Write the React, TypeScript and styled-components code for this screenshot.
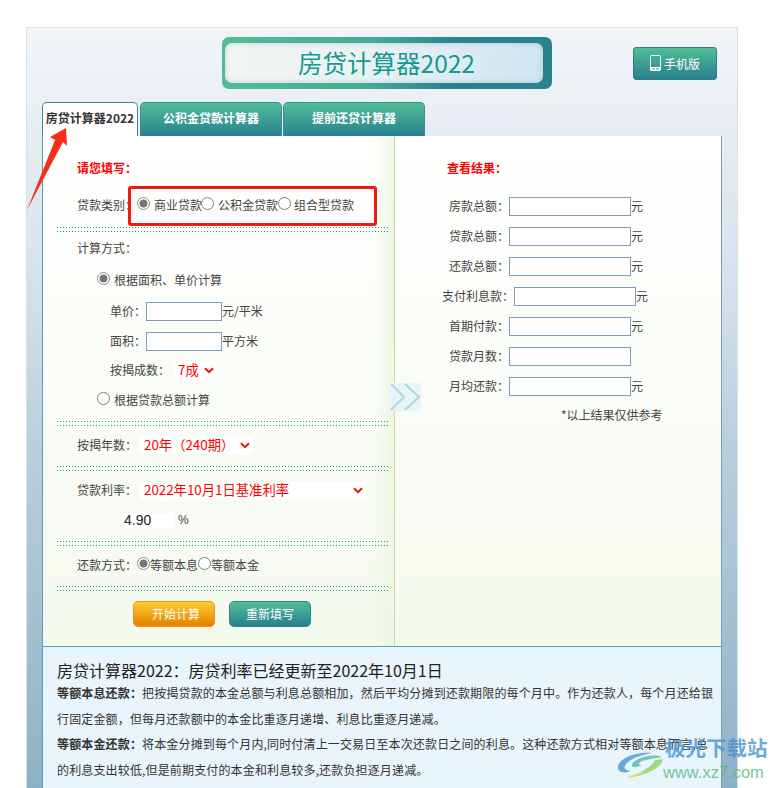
import React from 'react'
import styled, { createGlobalStyle, css } from 'styled-components'

const GlobalStyle = createGlobalStyle`
    html, body {
        margin: 0;
        height: 788px;
        overflow: hidden;
        background: #ffffff;
    }
    body, input, select, button {
        font-family: "Noto Sans CJK SC", "Liberation Sans", sans-serif;
    }
`;

const tealGradient = css`
    background: linear-gradient(#52bd96, #28808f);
`;

const Page = styled.div`
    position: relative;
    width: 778px;
    height: 788px;
    overflow: hidden;
    padding-top: 27px;
    box-sizing: border-box;
`;

const Wrapper = styled.div`
    box-sizing: border-box;
    width: 712px;
    height: 761px;
    margin-left: 26px;
    padding: 9px 16px 0 15px;
    border: 1px solid #d3e2ec;
    border-bottom: none;
    background: linear-gradient(#f1f5f8 0, #e6edf2 110px, #dbe6ee 210px, #b9cfdc 420px, #a2c0d2 600px, #8db1c7 761px);
`;

const Header = styled.div`
    display: flex;
    align-items: center;
    height: 52px;
    margin-bottom: 13px;
`;

const Logo = styled.div`
    box-sizing: border-box;
    width: 330px;
    height: 52px;
    margin-left: 180px;
    padding: 6px 9px 6px 3px;
    border-radius: 7px;
    background: linear-gradient(100deg, #52bd96 0, #45ab96 45%, #28828f 70%, #28828f 100%);
`;

const LogoInner = styled.div`
    display: flex;
    align-items: center;
    justify-content: center;
    box-sizing: border-box;
    height: 40px;
    padding-left: 5px;
    border-radius: 7px;
    background: linear-gradient(100deg, #f2f5f2 0, #e8f2f4 45%, #cfe5f2 100%);
    box-shadow: inset 0 0 5px rgba(120, 160, 170, 0.45);
    color: #149a8e;
    font-size: 24.5px;
    line-height: 40px;
`;

const MobileButton = styled.button`
    ${tealGradient}
    display: flex;
    align-items: center;
    justify-content: center;
    gap: 3px;
    box-sizing: border-box;
    width: 84px;
    height: 33px;
    margin-left: 81px;
    padding: 0;
    border: 1px solid #3d7786;
    border-radius: 3px;
    color: #ffffff;
    font-size: 12px;
`;

const Tabs = styled.div`
    display: flex;
    height: 34px;
`;

const Tab = styled.div<{ $active?: boolean; $width: number }>`
    box-sizing: border-box;
    width: ${(p) => p.$width}px;
    margin-right: 1px;
    border-radius: 5px 5px 0 0;
    border: 1px solid #3c8c98;
    border-bottom: none;
    text-align: center;
    font-size: 12px;
    font-weight: 700;
    line-height: 30px;
    ${(p) =>
      p.$active
        ? css`
            margin-right: 2px;
            background: #ffffff;
            color: #333333;
          `
        : css`
            ${tealGradient}
            color: #ffffff;
          `}
`;

const Panel = styled.div`
    position: relative;
    display: flex;
    box-sizing: border-box;
    width: 680px;
    height: 511px;
    border-left: 1px solid #5e9cb4;
    border-right: 1px solid #7f9db9;
    border-bottom: 1px solid #5e9cb4;
    background: linear-gradient(#ffffff 0, #fdfefb 120px, #f4f9ee 100%);
`;

const LeftColumn = styled.div`
    box-sizing: border-box;
    width: 352px;
    padding: 20px 6px 0 14px;
    border-right: 1px solid #c4e09c;
    background: linear-gradient(to right, rgba(236, 246, 226, 0) 330px, rgba(236, 246, 226, 0.9) 351px);
`;

const RightColumn = styled.div`
    flex: 1;
    padding-top: 20px;
`;

const Row = styled.div<{ $top?: number; $indent?: number }>`
    display: flex;
    align-items: center;
    box-sizing: border-box;
    height: 24px;
    margin-top: ${(p) => p.$top ?? 0}px;
    padding-left: ${(p) => p.$indent ?? 20}px;
    padding-bottom: 2px;
    color: #444444;
    font-size: 12px;
    white-space: nowrap;
`;

const Heading = styled.div<{ $indent: number }>`
    height: 24px;
    padding-left: ${(p) => p.$indent}px;
    color: #ff0000;
    font-size: 12px;
    font-weight: 700;
    line-height: 24px;
`;

const Divider = styled.div<{ $top: number }>`
    height: 5px;
    margin-top: ${(p) => p.$top}px;
    background-image:
        repeating-linear-gradient(to right, #1f9a88 0, #1f9a88 1px, transparent 1px, transparent 3px),
        repeating-linear-gradient(to right, #1f9a88 0, #1f9a88 1px, transparent 1px, transparent 3px);
    background-size: 100% 1px, 100% 1px;
    background-position: 0 0, 0 4px;
    background-repeat: no-repeat;
`;

const Radio = styled.span<{ $checked?: boolean; $gap?: number; $pull?: number }>`
    box-sizing: border-box;
    flex: none;
    width: 13px;
    height: 13px;
    margin: -2px ${(p) => p.$gap ?? 4}px 0 ${(p) => p.$pull ?? 0}px;
    border: 1px solid #808080;
    border-radius: 50%;
    background: #ffffff;
    ${(p) =>
      p.$checked &&
      css`
        border-color: #8f8f8f;
        background: radial-gradient(circle, #767676 0, #767676 3.6px, #ffffff 4.4px);
      `}
`;

const TextInput = styled.input<{ $width: number }>`
    box-sizing: border-box;
    width: ${(p) => p.$width}px;
    height: 19px;
    margin-top: 2px;
    padding: 0 2px;
    border: 1px solid #7f9db9;
    background: #ffffff;
    outline: none;
`;

const RateInput = styled.input`
    box-sizing: border-box;
    width: 50px;
    height: 15px;
    margin-left: 47px;
    margin-top: 2px;
    padding: 0;
    border: none;
    background: #ffffff;
    color: #222222;
    font-family: "Liberation Sans", sans-serif;
    font-size: 14px;
`;

const Percent = styled.span`
    margin-left: 4px;
    margin-top: 2px;
    font-family: "Liberation Sans", sans-serif;
    font-size: 12px;
`;

const SelectBox = styled.div<{ $width: number; $left: number }>`
    position: relative;
    box-sizing: border-box;
    width: ${(p) => p.$width}px;
    height: 17px;
    margin-top: 2px;
    margin-left: ${(p) => p.$left}px;
    background: #ffffff;
`;

const Select = styled.select`
    appearance: none;
    display: block;
    width: 100%;
    height: 15px;
    padding: 0 0 0 4px;
    border: none;
    background: transparent;
    color: #ff0000;
    font-size: 13.33px;
    line-height: 15px;
    outline: none;
`;

const Chevron = styled.svg`
    position: absolute;
    top: 5px;
    right: 3px;
    width: 10px;
    height: 7px;
`;

const ButtonRow = styled.div`
    display: flex;
    gap: 14px;
    margin-top: 10px;
    padding-left: 76px;
`;

const ActionButton = styled.button<{ $orange?: boolean }>`
    box-sizing: border-box;
    width: 82px;
    height: 26px;
    padding: 0 0 2px;
    border-radius: 5px;
    color: #ffffff;
    font-size: 12px;
    ${(p) =>
      p.$orange
        ? css`
            padding-left: 4px;
            border: 1px solid #e9950f;
            background: linear-gradient(#fdcf30, #e37f00);
          `
        : css`
            border: 1px solid #2f8392;
            background: linear-gradient(#52bd96, #28808f);
          `}
`;

const ResultRow = styled.div<{ $wide?: boolean; $top?: number }>`
    display: flex;
    align-items: center;
    box-sizing: border-box;
    height: 24px;
    margin-top: ${(p) => p.$top ?? 6}px;
    padding-left: ${(p) => (p.$wide ? 47 : 54)}px;
    padding-bottom: 2px;
    color: #444444;
    font-size: 12px;
    white-space: nowrap;
`;

const Note = styled.div`
    margin-top: 5px;
    padding-left: 166px;
    color: #444444;
    font-size: 12px;
    line-height: 24px;
`;

const ArrowTile = styled.svg`
    position: absolute;
    top: 247px;
    left: 344px;
    width: 34px;
    height: 28px;
`;

const Info = styled.div`
    box-sizing: border-box;
    width: 680px;
    height: 150px;
    padding: 11px 6px 0 14px;
    border-left: 1px solid #5e9cb4;
    border-right: 1px solid #7f9db9;
    background: #e8f5fc;
    color: #333333;
    font-size: 12px;
    letter-spacing: 0.15px;
    line-height: 25.5px;
`;

const InfoTitle = styled.div`
    color: #222222;
    font-size: 16px;
    letter-spacing: 0;
    line-height: 24px;
`;

const InfoText = styled.div`
    margin-top: -2px;
    & + & {
        margin-top: 0;
    }
`;

const Annotation = styled.div`
    position: absolute;
    top: 186px;
    left: 128px;
    box-sizing: border-box;
    width: 249px;
    height: 40px;
    border: 3px solid #f11a10;
    border-radius: 3px;
`;

const RedArrow = styled.svg`
    position: absolute;
    top: 126px;
    left: 25px;
    width: 44px;
    height: 86px;
`;

const Watermark = styled.div`
    position: absolute;
    top: 733px;
    left: 618px;
    display: flex;
    opacity: 0.8;
`;

const WatermarkLogo = styled.svg`
    width: 46px;
    height: 27px;
    margin-top: 19px;
`;

const WatermarkText = styled.div`
    display: flex;
    flex-direction: column;
    margin-left: 1px;
`;

const WatermarkName = styled.div`
    color: #4b95d2;
    font-size: 20.5px;
    font-weight: 700;
    line-height: 28px;
    white-space: nowrap;
`;

const WatermarkUrl = styled.div`
    margin-left: -2px;
    color: #58bb7e;
    font-family: "Liberation Sans", sans-serif;
    font-size: 16.5px;
    line-height: 22px;
    white-space: nowrap;
`;

const RedChevron = () => (
  <Chevron viewBox="0 0 10 7">
    <path d="M1 1.2 L5 5.2 L9 1.2" fill="none" stroke="#f01010" strokeWidth="2" />
  </Chevron>
);

const results = [
  { label: '房款总额：', unit: true },
  { label: '贷款总额：', unit: true },
  { label: '还款总额：', unit: true },
  { label: '支付利息款：', unit: true, wide: true },
  { label: '首期付款：', unit: true },
  { label: '贷款月数：', unit: false },
  { label: '月均还款：', unit: true },
];

const App: React.FC = () => {
  return (
    <Page>
      <GlobalStyle />
      <Wrapper>
        <Header>
          <Logo>
            <LogoInner>房贷计算器2022</LogoInner>
          </Logo>
          <MobileButton>
            <svg width="11" height="16" viewBox="0 0 11 16">
              <rect x="0.5" y="0.5" width="10" height="15" rx="1" fill="none" stroke="#fff" />
              <rect x="0.5" y="12" width="10" height="3.5" fill="#fff" />
              <rect x="2.5" y="13.2" width="2" height="1.3" fill="#2f8a90" />
              <rect x="6.5" y="13.2" width="2" height="1.3" fill="#2f8a90" />
            </svg>
            手机版
          </MobileButton>
        </Header>

        <Tabs>
          <Tab $active $width={96}>房贷计算器2022</Tab>
          <Tab $width={142}>公积金贷款计算器</Tab>
          <Tab $width={142}>提前还贷计算器</Tab>
        </Tabs>

        <Panel>
          <LeftColumn>
            <Heading $indent={20}>请您填写：</Heading>
            <Row $top={13}>
              贷款类别：
              <Radio $checked />商业贷款
              <Radio $pull={-1} />公积金贷款
              <Radio $gap={3} />组合型贷款
            </Row>
            <Divider $top={10} />
            <Row $top={4}>计算方式：</Row>
            <Row $top={8} $indent={40}>
              <Radio $checked />根据面积、单价计算
            </Row>
            <Row $top={7} $indent={53}>
              单价：<TextInput $width={76} />元/平米
            </Row>
            <Row $top={6} $indent={53}>
              面积：<TextInput $width={76} />平方米
            </Row>
            <Row $top={5} $indent={53}>
              按揭成数：
              <SelectBox $width={43} $left={4}>
                <Select defaultValue="7">
                  <option value="7">7成</option>
                </Select>
                <RedChevron />
              </SelectBox>
            </Row>
            <Row $top={6} $indent={40}>
              <Radio />根据贷款总额计算
            </Row>
            <Divider $top={9} />
            <Row $top={7}>
              按揭年数：
              <SelectBox $width={113} $left={3}>
                <Select defaultValue="20">
                  <option value="20">20年（240期）</option>
                </Select>
                <RedChevron />
              </SelectBox>
            </Row>
            <Divider $top={9} />
            <Row $top={7}>
              贷款利率：
              <SelectBox $width={226} $left={3}>
                <Select defaultValue="2022">
                  <option value="2022">2022年10月1日基准利率</option>
                </Select>
                <RedChevron />
              </SelectBox>
            </Row>
            <Row $top={6}>
              <RateInput defaultValue="4.90" />
              <Percent>%</Percent>
            </Row>
            <Divider $top={9} />
            <Row $top={7}>
              还款方式：
              <Radio $checked $gap={0} />等额本息
              <Radio $gap={0} />等额本金
            </Row>
            <Divider $top={9} />
            <ButtonRow>
              <ActionButton $orange>开始计算</ActionButton>
              <ActionButton>重新填写</ActionButton>
            </ButtonRow>
          </LeftColumn>

          <RightColumn>
            <Heading $indent={52}>查看结果：</Heading>
            {results.map((r, i) => (
              <ResultRow key={r.label} $wide={r.wide} $top={i === 0 ? 14 : 6}>
                {r.label}
                <TextInput $width={122} />
                {r.unit && '元'}
              </ResultRow>
            ))}
            <Note>*以上结果仅供参考</Note>
          </RightColumn>

          <ArrowTile viewBox="0 0 34 28">
            <rect x="2" width="32" height="28" fill="#e8f4fa" />
            <path d="M4 1 L17 14 L4 27 M18 1 L32 14 L18 27" fill="none" stroke="#aed8d8" strokeWidth="2" />
          </ArrowTile>
        </Panel>

        <Info>
          <InfoTitle>房贷计算器2022：房贷利率已经更新至2022年10月1日</InfoTitle>
          <InfoText>
            <b>等额本息还款：</b>把按揭贷款的本金总额与利息总额相加，然后平均分摊到还款期限的每个月中。作为还款人，每个月还给银行固定金额，但每月还款额中的本金比重逐月递增、利息比重逐月递减。
          </InfoText>
          <InfoText>
            <b>等额本金还款：</b>将本金分摊到每个月内,同时付清上一交易日至本次还款日之间的利息。这种还款方式相对等额本息而言,总的利息支出较低,但是前期支付的本金和利息较多,还款负担逐月递减。
          </InfoText>
        </Info>
      </Wrapper>

      <Annotation />
      <RedArrow viewBox="0 0 44 86">
        <polygon points="2,84 30,14 25,11 41,2 42,20 38,16" fill="#f4301c" />
      </RedArrow>

      <Watermark>
        <WatermarkLogo viewBox="0 0 46 27">
          <path d="M34 1 C18 -1 2 6 0 14 C-1 20 6 22 13 19 C7 19 5 16 8 12 C13 6 24 3 34 1 Z" fill="#4b95d2" />
          <path d="M44 5 C34 1 18 6 14 12 C13 16 18 16 24 13 C20 13 20 11 24 9 C30 7 38 6 44 5 Z" fill="#58bb9e" />
          <path d="M45 7 C44 15 32 22 10 26 C22 21 34 15 37 8 Z" fill="#8fcf5e" />
          <path d="M28 19 C22 23 14 25 8 26 C12 23 20 21 28 19 Z" fill="#e6dc4a" />
        </WatermarkLogo>
        <WatermarkText>
          <WatermarkName>极光下载站</WatermarkName>
          <WatermarkUrl>www.xz7.com</WatermarkUrl>
        </WatermarkText>
      </Watermark>
    </Page>
  )
}

export default App
